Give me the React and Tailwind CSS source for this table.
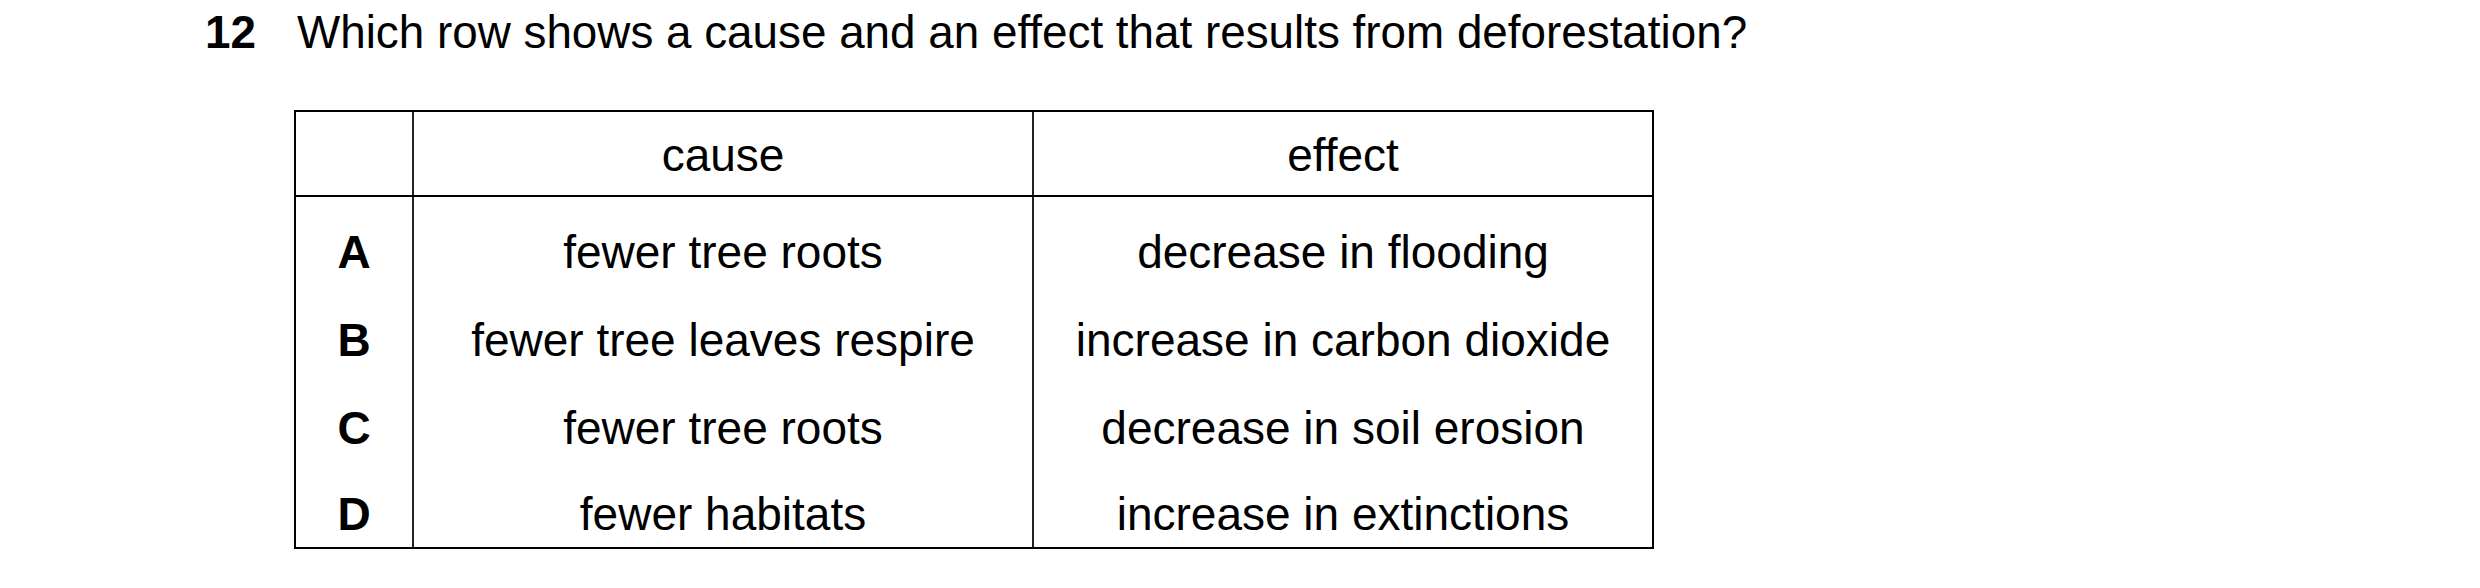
import React from "react";

const rows = [
  { key: "A", cause: "fewer tree roots", effect: "decrease in flooding", h: "h-[98px]", pad: "pt-[12px]" },
  { key: "B", cause: "fewer tree leaves respire", effect: "increase in carbon dioxide", h: "h-[88px]", pad: "pt-[2px]" },
  { key: "C", cause: "fewer tree roots", effect: "decrease in soil erosion", h: "h-[88px]", pad: "pt-[2px]" },
  { key: "D", cause: "fewer habitats", effect: "increase in extinctions", h: "h-[76px]", pad: "pt-[11px]" },
];

const App = () => {
  return (
    <div
      className="w-[2480px] h-[588px] bg-white text-black pl-[205px] pt-[10px]"
      style={{ fontFamily: '"Liberation Sans", Arial, sans-serif' }}
    >
      {/* question */}
      <div className="flex text-[45.8px] leading-[45px]">
        <span className="w-[92px] font-bold">12</span>
        <span>Which row shows a cause and an effect that results from deforestation?</span>
      </div>

      {/* answer table */}
      <div className="ml-[89px] mt-[55px] w-[1360px] border-2 border-black text-[46px] leading-[45px]">
        <div className="grid grid-cols-[116px_620px_620px] h-[85px] border-b-2 border-black">
          <div />
          <div className="flex items-center justify-center border-l-2 border-[#222] pt-[3px]">cause</div>
          <div className="flex items-center justify-center border-l-2 border-[#222] pt-[3px]">effect</div>
        </div>

        {rows.map((row) => (
          <div key={row.key} className={`grid grid-cols-[116px_620px_620px] ${row.h}`}>
            <div className={`flex items-center justify-center font-bold ${row.pad}`}>{row.key}</div>
            <div className={`flex items-center justify-center border-l-2 border-[#222] ${row.pad}`}>
              {row.cause}
            </div>
            <div className={`flex items-center justify-center border-l-2 border-[#222] ${row.pad}`}>
              {row.effect}
            </div>
          </div>
        ))}
      </div>
    </div>
  );
};

export default App;
